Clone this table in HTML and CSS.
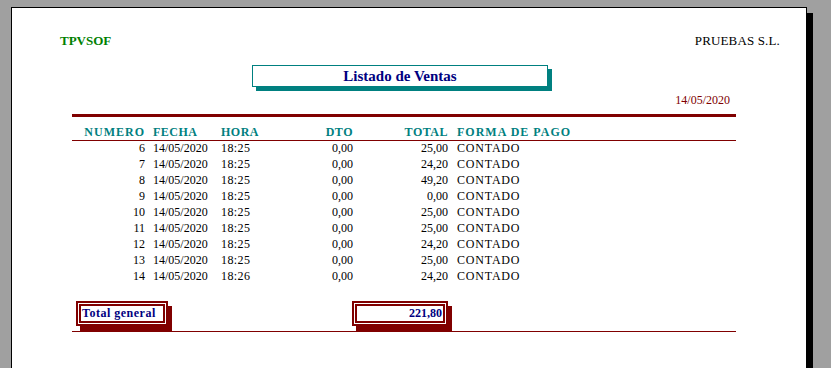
FILE: index.html
```
<!DOCTYPE html>
<html lang="es">
<head>
    <meta charset="UTF-8">
    <meta name="viewport" content="width=device-width, initial-scale=1.0">
    <title>Listado de Ventas</title>
    <link rel="stylesheet" href="styles.css">
</head>
<body>

<div class="pagina">
    <header class="cabecera">
        <span class="empresa-app">TPVSOF</span>
        <span class="empresa">PRUEBAS S.L.</span>
    </header>

    <div class="titulo">Listado de Ventas</div>

    <div class="informe">
        <div class="fecha-informe">14/05/2020</div>
        <div class="raya"></div>

        <div class="fila titulos">
            <span class="der ancho">NUMERO</span>
            <span class="fecha">FECHA</span>
            <span>HORA</span>
            <span class="der">DTO</span>
            <span class="der">TOTAL</span>
            <span class="pago ancho">FORMA DE PAGO</span>
        </div>

        <div id="ventas"></div>

        <div class="totales">
            <div class="caja caja-texto">Total general</div>
            <div class="caja caja-importe">221,80</div>
        </div>
    </div>
</div>

<script>
    const ventas = [
        { nro: 6,  fecha: '14/05/2020', hora: '18:25', dto: '0,00', total: '25,00', pago: 'CONTADO' },
        { nro: 7,  fecha: '14/05/2020', hora: '18:25', dto: '0,00', total: '24,20', pago: 'CONTADO' },
        { nro: 8,  fecha: '14/05/2020', hora: '18:25', dto: '0,00', total: '49,20', pago: 'CONTADO' },
        { nro: 9,  fecha: '14/05/2020', hora: '18:25', dto: '0,00', total: '0,00',  pago: 'CONTADO' },
        { nro: 10, fecha: '14/05/2020', hora: '18:25', dto: '0,00', total: '25,00', pago: 'CONTADO' },
        { nro: 11, fecha: '14/05/2020', hora: '18:25', dto: '0,00', total: '25,00', pago: 'CONTADO' },
        { nro: 12, fecha: '14/05/2020', hora: '18:25', dto: '0,00', total: '24,20', pago: 'CONTADO' },
        { nro: 13, fecha: '14/05/2020', hora: '18:25', dto: '0,00', total: '25,00', pago: 'CONTADO' },
        { nro: 14, fecha: '14/05/2020', hora: '18:26', dto: '0,00', total: '24,20', pago: 'CONTADO' }
    ];

    const lista = document.getElementById('ventas');
    ventas.forEach(v => {
        const fila = document.createElement('div');
        fila.className = 'fila dato';
        fila.innerHTML = `
            <span class="der">${v.nro}</span>
            <span class="fecha">${v.fecha}</span>
            <span class="hora">${v.hora}</span>
            <span class="der">${v.dto}</span>
            <span class="der">${v.total}</span>
            <span class="pago">${v.pago}</span>
        `;
        lista.appendChild(fila);
    });
</script>
</body>
</html>
```

FILE: styles.css
```
body {
    background-color: #a0a0a0;
    font-family: 'Liberation Serif', 'Times New Roman', serif;
    margin: 0;
    height: 368px;
    overflow: hidden;
}

/* hoja del informe, se corta por abajo */
.pagina {
    box-sizing: border-box;
    width: 796px;
    height: 361px;
    margin: 7px 0 0 11px;
    padding-top: 25px;
    background-color: #fff;
    border: 1px solid #000;
    border-bottom: none;
    box-shadow: 6px 6px 0 #000;
}

.cabecera {
    display: flex;
    justify-content: space-between;
    padding: 0 26px 0 48px;
    font-size: 13px;
    line-height: 16px;
}

.empresa-app {
    color: #008000;
    font-weight: bold;
}

.empresa {
    color: #000;
    letter-spacing: 0.15px;
}

.titulo {
    box-sizing: border-box;
    width: 296px;
    height: 22px;
    margin: 16px 0 0 240px;
    border: 1px solid #008080;
    box-shadow: 4px 4px 0 #008080;
    color: #000080;
    font-weight: bold;
    font-size: 15px;
    line-height: 20px;
    text-align: center;
}

.informe {
    width: 664px;
    margin-left: 60px;
    font-size: 12px;
}

.fecha-informe {
    margin-top: 5px;
    padding-right: 6px;
    color: #800000;
    line-height: 16px;
    text-align: right;
}

.raya {
    height: 3px;
    margin-top: 6px;
    background-color: #800000;
}

.fila {
    display: grid;
    grid-template-columns: 73px 76px 60px 72px 95px 288px;
    white-space: nowrap;
}

.der {
    text-align: right;
}

.fecha {
    padding-left: 8px;
}

.pago {
    padding-left: 9px;
}

.titulos {
    padding-top: 7px;
    line-height: 16px;
    color: #008080;
    font-weight: bold;
    letter-spacing: 0.5px;
    border-bottom: 1px solid #800000;
}

.titulos .ancho {
    letter-spacing: 1px;
}

.dato {
    color: #000;
    line-height: 14px;
    padding-bottom: 2px;
}

.dato .hora {
    letter-spacing: 0.4px;
}

.dato .pago {
    letter-spacing: 0.8px;
}

.totales {
    display: flex;
    margin-top: 16px;
    padding: 0 0 5px 4px;
    border-bottom: 1px solid #800000;
}

.caja {
    box-sizing: border-box;
    height: 25px;
    border: 5px double #800000;
    box-shadow: 4px 5px 0 #800000;
    background-color: #fff;
    color: #000080;
    font-weight: bold;
    line-height: 15px;
}

.caja-texto {
    width: 92px;
    padding-left: 1px;
    letter-spacing: 0.5px;
}

.caja-importe {
    width: 96px;
    margin-left: 184px;
    padding-right: 1px;
    text-align: right;
}
```
